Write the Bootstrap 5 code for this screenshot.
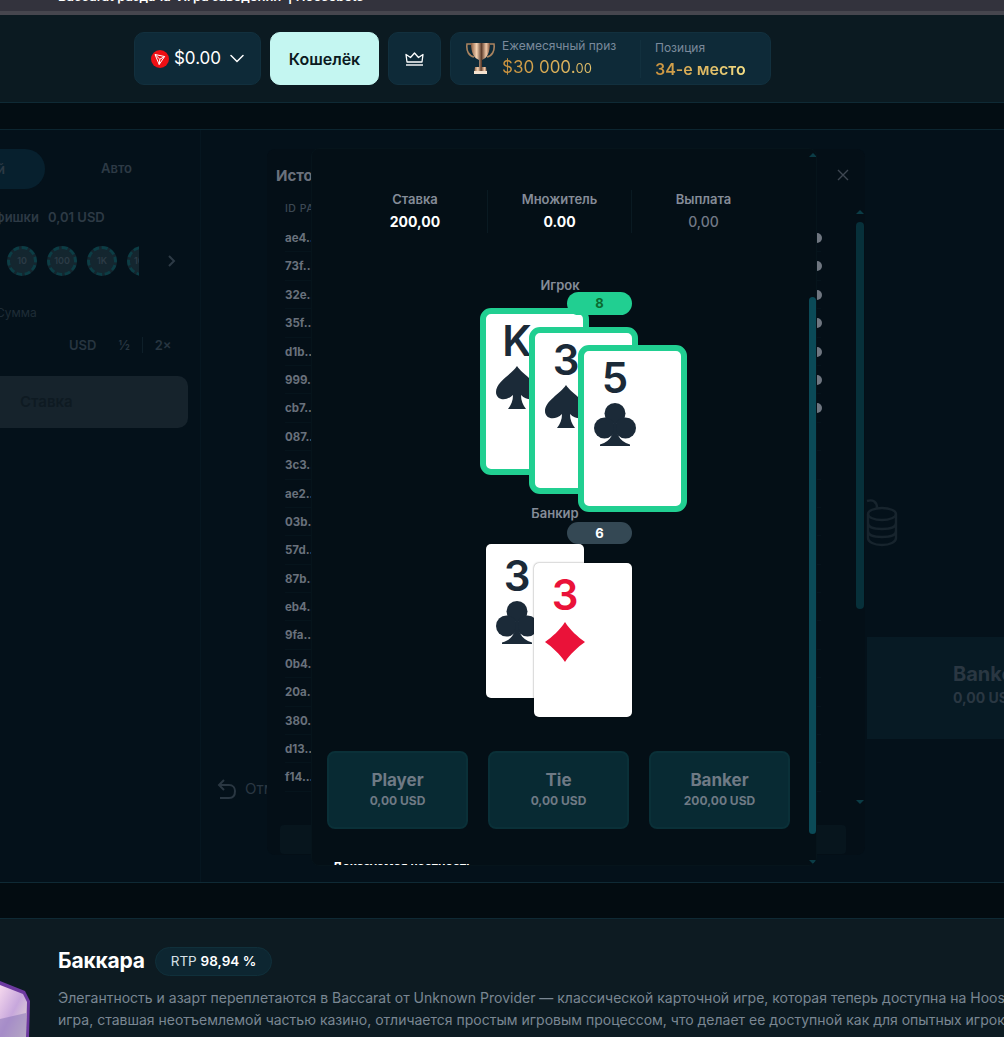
<!DOCTYPE html>
<html lang="ru">
<head>
    <meta charset="UTF-8">
    <meta name="viewport" content="width=device-width, initial-scale=1.0">
    <title>Баккара</title>
    <link href="https://cdn.jsdelivr.net/npm/bootstrap@5.3.3/dist/css/bootstrap.min.css" rel="stylesheet">
    <script src="https://cdn.jsdelivr.net/npm/bootstrap@5.3.3/dist/js/bootstrap.bundle.min.js"></script>
    <style>
        html, body { height: 1037px; overflow: hidden; }
        body { background: #0d1b22; font-family: Inter, "Liberation Sans", sans-serif; color: #fff; }

        /* browser strip */
        .top-strip { height: 15px; background: #33333d; border-bottom: 4px solid #46464e; overflow: hidden; padding-left: 58px; font-size: 13px; font-weight: 600; line-height: 16px; color: #fff; white-space: nowrap; }
        .top-strip span { display: block; margin-top: -12px; }

        /* header */
        .site-head { height: 88px; background: #0b1a21; border-bottom: 1px solid #0f2a35; padding: 17px 0 0 134px; gap: 9px; }
        .head-btn { height: 53px; background: #0e2a38; border: 1px solid #12303e; border-radius: 10px; }
        .balance-btn { width: 127px; font-size: 17px; gap: 5px; }
        .wallet-btn { width: 109px; background: #c4f6f1; border-color: #c4f6f1; color: #0b1a21; font-size: 16px; font-weight: 600; }
        .crown-btn { width: 53px; }
        .prize-box { width: 321px; padding-left: 15px; }
        .prize-col { width: 138px; margin-left: 7px; }
        .pos-col { border-left: 1px solid #12303e; padding-left: 14px; height: 38px; margin-left: 0; }
        .prize-lbl { font-size: 12px; line-height: 16px; color: #7b8a9c; white-space: nowrap; }
        .prize-val { font-size: 17px; line-height: 22px; margin-top: 2px; white-space: nowrap; background: linear-gradient(90deg, #c9913d, #f3dd84); -webkit-background-clip: text; background-clip: text; color: transparent; }
        .prize-val small { font-size: 13px; }
        .pos-val { font-weight: 600; font-size: 16px; }

        .dark-band { height: 27px; background: #030d13; border-bottom: 1px solid #0c2530; }

        /* game area behind the dialogs */
        .game-area { position: relative; height: 753px; background: #04111a; border-bottom: 1px solid #0f2a35; overflow: hidden; }
        .bet-panel { width: 258px; margin-left: -70px; flex-shrink: 0; padding-top: 19px; }
        .mode-tabs { height: 40px; font-size: 13px; font-weight: 600; color: #2d3a45; }
        .mode-on { width: 115px; background: #07202e; border-radius: 0 20px 20px 0; padding-right: 40px; text-align: right; line-height: 40px; }
        .mode-off { width: 143px; text-align: center; line-height: 38px; }
        .chip-lbl { margin-top: 19px; height: 18px; font-size: 13px; font-weight: 600; color: #2d3a45; line-height: 18px; padding-left: 13px; gap: 9px; white-space: nowrap; }
        .chip-row { margin-top: 18px; height: 34px; gap: 10px; padding-left: 77px; position: relative; }
        .chip-clip { width: 132px; overflow: hidden; gap: 10px; margin-right: 18px; }
        .chip { width: 30px; height: 30px; flex-shrink: 0; border-radius: 50%; background: #14262f; border: 3px dashed #0c3d45; font-size: 9px; font-weight: 600; color: #2c3b46; line-height: 24px; text-align: center; }
        .chevron-dim { width: 9px; height: 14px; }
        .sum-lbl { margin-top: 27px; font-size: 12px; color: #1e2c36; padding-left: 66px; line-height: 16px; }
        .sum-row { margin-top: 14px; height: 20px; padding-left: 139px; font-size: 13px; font-weight: 600; color: #273540; line-height: 20px; }
        .sum-row .half { margin-left: 22px; }
        .sum-row .sep { width: 1px; height: 16px; background: #0e1f29; margin: 2px 12px; }
        .stake-btn { margin-top: 21px; height: 52px; background: #16232c; border-radius: 0 10px 10px 0; font-size: 15px; font-weight: 600; color: #0e1a22; line-height: 52px; padding-left: 90px; }
        .table-pane { flex-grow: 1; margin-left: 12px; border-left: 1px solid #061620; padding-top: 369px; overflow: hidden; }
        .coins { display: block; margin-left: 665px; width: 32px; height: 48px; }
        .banker-bg { margin-top: 90px; margin-left: 666px; width: 300px; height: 102px; background: #071a24; padding-left: 86px; color: #2a3742; font-weight: 700; }
        .banker-bg .big { font-size: 20px; line-height: 24px; padding-top: 25px; }
        .banker-bg .sub { font-size: 14px; line-height: 18px; margin-top: 3px; }
        .undo-row { margin-top: 39px; margin-left: 16px; gap: 8px; color: #2a3742; font-size: 15px; line-height: 22px; }

        /* history dialog */
        .history-box { position: absolute; left: 267px; top: 19px; width: 598px; height: 706px; background: #040f17; border-radius: 8px; }
        .history-title { font-size: 15px; font-weight: 700; color: #6a717c; line-height: 20px; padding: 17px 0 0 9px; }
        .history-head { font-size: 10.5px; color: #3c4854; font-weight: 500; line-height: 14px; padding: 16px 0 0 18px; letter-spacing: .5px; }
        .history-rows { margin: 8px 0 0 0; padding: 0 0 0 18px; list-style: none; }
        .history-rows li { height: 28.4px; line-height: 28.4px; font-size: 11.5px; font-weight: 700; color: #69717c; border-bottom: 1px solid #06141c; width: 536px; position: relative; }
        .round-dot { position: absolute; right: -1px; top: 9px; width: 10px; height: 10px; border-radius: 50%; background: #6f7680; }
        .no-dot .round-dot { display: none; }
        .history-close { position: absolute; left: 570px; top: 20px; width: 12px; height: 12px; }
        .scroll-arrow-up, .scroll-arrow-down { position: absolute; width: 0; height: 0; border-left: 4px solid transparent; border-right: 4px solid transparent; }
        .scroll-arrow-up { border-bottom: 4px solid #0b3c46; }
        .scroll-arrow-down { border-top: 4px solid #0b3c46; }
        .history-scroll { position: absolute; left: 589px; top: 73px; width: 8px; height: 387px; border-radius: 4px; background: #07303a; }
        .history-box .scroll-arrow-up { left: 589px; top: 61px; }
        .history-box .scroll-arrow-down { left: 589px; top: 651px; }
        .history-foot { position: absolute; left: 13px; top: 676px; width: 566px; height: 29px; background: #07151d; border-radius: 4px; }

        /* round details dialog */
        .round-box { position: absolute; left: 311px; top: 18px; width: 506px; height: 718px; background: #040f16; border: 1px solid #06141b; border-radius: 8px; overflow: hidden; padding-top: 41px; }
        .stats-row { margin-left: 31px; width: 432px; height: 43px; }
        .stat-col { width: 144px; text-align: center; border-left: 1px solid #0a1a22; }
        .stat-col:first-child { border-left: 0; }
        .stat-lbl { font-size: 13px; font-weight: 600; line-height: 18px; color: #858c98; }
        .stat-val { font-size: 14px; font-weight: 700; line-height: 18px; margin-top: 5px; color: #fff; }
        .stat-val.muted { color: #727986; font-weight: 500; }
        .hand-lbl { font-size: 13px; font-weight: 600; line-height: 16px; color: #858c98; text-align: center; width: 496px; }
        .first-lbl { margin-top: 44px; }
        .banker-lbl { margin-top: -6px; padding-right: 10px; position: relative; }
        .hand { position: relative; margin-left: 168px; width: 207px; }
        .hand-player { height: 203px; margin-top: 15px; }
        .hand-banker { height: 173px; margin-top: 23px; }
        .score { position: absolute; left: 87px; width: 65px; border-radius: 12px; text-align: center; font-size: 13px; font-weight: 700; z-index: 5; }
        .score-win { top: -16px; height: 23px; line-height: 23px; background: #21cf91; color: #0b6a2f; }
        .score-lose { top: -22px; height: 22px; line-height: 22px; background: #344854; color: #fff; }
        .play-card { position: absolute; background: #fff; color: #1b2a38; }
        .play-card.winner { width: 109px; height: 167px; border: 6px solid #21cf91; border-radius: 11px; }
        .play-card.plain { width: 98px; height: 154px; border-radius: 5px; border: 0 solid transparent; box-shadow: 0 0 2px rgba(0,0,0,.5); }
        .p1 { left: 0; top: 0; } .p2 { left: 49px; top: 19px; } .p3 { left: 98px; top: 37px; }
        .b1 { left: 6px; top: 0; } .b2 { left: 54px; top: 19px; }
        .card-face { width: 62px; text-align: center; }
        .winner .card-face { padding-top: 2px; margin-left: 0; }
        .plain .card-face { padding-top: 7px; }
        .rank { font-size: 42px; font-weight: 600; line-height: 50px; }
        .suit { display: block; margin: 0 auto; width: 42px; height: 44px; margin-top: 0; }
        .is-red { color: #ea1239; }
        .bet-tiles { position: absolute; left: 15px; top: 602px; gap: 20px; }
        .bet-tile { width: 141px; height: 78px; background: #082a33; border: 2px solid #0a3038; border-radius: 8px; text-align: center; color: #6f7a85; font-weight: 700; padding-top: 17px; }
        .bet-tile .big { font-size: 17px; line-height: 21px; }
        .bet-tile .sub { font-size: 12px; line-height: 16px; margin-top: 2px; }
        .fair-row { position: absolute; left: 20px; top: 711px; font-size: 12px; font-weight: 700; color: #fff; line-height: 14px; white-space: nowrap; }
        .round-scroll { position: absolute; left: 497px; top: 148px; width: 7px; height: 537px; border-radius: 4px; background: #0b4a57; }
        .round-box .scroll-arrow-up { left: 497px; top: 4px; }
        .round-box .scroll-arrow-down { left: 497px; top: 711px; }

        .gap-band { height: 36px; background: #030c11; border-bottom: 1px solid #0f2a35; }

        /* description */
        .about { height: 119px; overflow: hidden; background: #0d1b22; }
        .about-thumb { width: 58px; flex-shrink: 0; padding-top: 56px; }
        .about-body { padding-top: 27px; flex-grow: 1; min-width: 0; }
        .about-title { font-size: 21px; font-weight: 700; line-height: 30px; margin: 0; letter-spacing: -.2px; }
        .rtp-pill { height: 29px; margin-left: 10px; padding: 0 15px; background: #0d2631; border: 1px solid #10303b; border-radius: 15px; font-size: 13.5px; line-height: 27px; color: #d7e0e6; }
        .rtp-pill b { font-weight: 600; color: #fff; }
        .about-text { margin-top: 11px; font-size: 14px; line-height: 22px; color: #7a8793; white-space: nowrap; overflow: hidden; }
    </style>
</head>
<body>

<div class="top-strip"><span>Baccarat раздача &nbsp;Игра заведении &nbsp;| Hoosebets</span></div>

<header class="site-head d-flex align-items-start">
    <div class="head-btn balance-btn d-flex align-items-center justify-content-center">
        <svg width="18" height="18" viewBox="0 0 18 18"><circle cx="9" cy="9" r="9" fill="#ef0f14"/><path d="M4 4.5 L13.6 6.5 L8.2 14.5 Z M4 4.5 L8.8 9.2 L8.2 14.5 M8.8 9.2 L13.6 6.5" fill="none" stroke="#fff" stroke-width="1" stroke-linejoin="round"/></svg>
        <span>$0.00</span>
        <svg class="ms-1" width="14" height="9" viewBox="0 0 14 9"><path d="M1 1.5 L7 7.5 L13 1.5" fill="none" stroke="#fff" stroke-width="1.5" stroke-linecap="round"/></svg>
    </div>
    <div class="head-btn wallet-btn d-flex align-items-center justify-content-center">Кошелёк</div>
    <div class="head-btn crown-btn d-flex align-items-center justify-content-center">
        <svg width="19" height="14" viewBox="0 0 19 14"><path d="M2 10 L1 2.5 L5.5 5.5 L9.5 1 L13.5 5.5 L18 2.5 L17 10 Z" fill="none" stroke="#fff" stroke-width="1.3" stroke-linejoin="round"/><path d="M1 13 H18" stroke="#fff" stroke-width="1.4"/></svg>
    </div>
    <div class="head-btn prize-box d-flex align-items-center">
        <svg width="29" height="33" viewBox="0 0 29 33">
            <defs><linearGradient id="cup" x1="0" x2="1"><stop offset="0" stop-color="#8a5a3c"/><stop offset=".3" stop-color="#f5d3b3"/><stop offset=".55" stop-color="#5e3d2c"/><stop offset=".8" stop-color="#f0c8a8"/><stop offset="1" stop-color="#7c5038"/></linearGradient></defs>
            <path d="M5 2 H1 C0 9 3 14 8 15 M24 2 H28 C29 9 26 14 21 15" fill="none" stroke="#a9835f" stroke-width="1.6"/>
            <path d="M5 1 H24 C24 11 21 16 16 18 V25 H13 V18 C8 16 5 11 5 1 Z" fill="url(#cup)"/>
            <path d="M9 25 H20 L21 32 H8 Z" fill="url(#cup)"/>
            <rect x="8" y="29" width="13" height="3" fill="#f4e2cf"/>
        </svg>
        <div class="prize-col">
            <div class="prize-lbl">Ежемесячный приз</div>
            <div class="prize-val">$30 000.<small>00</small></div>
        </div>
        <div class="pos-col">
            <div class="prize-lbl">Позиция</div>
            <div class="prize-val pos-val">34-е место</div>
        </div>
    </div>
</header>

<div class="dark-band"></div>

<main class="game-area d-flex">
    <section class="bet-panel">
        <div class="mode-tabs d-flex">
            <div class="mode-on">Ручной</div>
            <div class="mode-off">Авто</div>
        </div>
        <div class="chip-lbl d-flex"><span>Размер фишки</span><span>0,01 USD</span></div>
        <div class="chip-row d-flex align-items-center">
            <div class="chip-clip d-flex">
                <div class="chip">10</div><div class="chip">100</div><div class="chip">1K</div><div class="chip">10K</div>
            </div>
            <svg class="chevron-dim" viewBox="0 0 9 14"><path d="M2 2 L7 7 L2 12" fill="none" stroke="#2d3a45" stroke-width="2"/></svg>
        </div>
        <div class="sum-lbl">Сумма</div>
        <div class="sum-row d-flex"><span>USD</span><span class="half">½</span><span class="sep"></span><span>2×</span></div>
        <div class="stake-btn">Ставка</div>
    </section>

    <section class="table-pane">
        <svg class="coins" viewBox="0 0 32 48" fill="none" stroke="#17242d" stroke-width="2.4">
            <path d="M1 2 C7 0 11 3 11 9"/>
            <ellipse cx="16" cy="15" rx="14" ry="6"/>
            <path d="M2 15 V39 C2 43 8 46 16 46 C24 46 30 43 30 39 V15 M2 24 C2 28 8 30 16 30 C24 30 30 28 30 24 M2 32 C2 36 8 38 16 38 C24 38 30 36 30 32"/>
        </svg>
        <div class="banker-bg">
            <div class="big">Banker</div>
            <div class="sub">0,00 USD</div>
        </div>
        <div class="undo-row d-flex align-items-center">
            <svg width="20" height="22" viewBox="0 0 20 22" fill="none" stroke="#2a3742" stroke-width="2"><path d="M7 2 L2 7 L7 12"/><path d="M2 7 H12 C16 7 18 10 18 13 C18 17 16 20 12 20 H3"/></svg>
            <span>Отмена</span>
        </div>
    </section>

    <section class="history-box">
        <div class="history-title">История ставок</div>
        <div class="history-head">ID РАУНДА</div>
        <ul class="history-rows" id="historyRows"></ul>
        <svg class="history-close" viewBox="0 0 12 12"><path d="M1 1 L11 11 M11 1 L1 11" stroke="#3e4752" stroke-width="1.4"/></svg>
        <span class="scroll-arrow-up"></span>
        <div class="history-scroll"></div>
        <span class="scroll-arrow-down"></span>
        <div class="history-foot"></div>
    </section>

    <section class="round-box">
        <div class="stats-row d-flex">
            <div class="stat-col"><div class="stat-lbl">Ставка</div><div class="stat-val">200,00</div></div>
            <div class="stat-col"><div class="stat-lbl">Множитель</div><div class="stat-val">0.00</div></div>
            <div class="stat-col"><div class="stat-lbl">Выплата</div><div class="stat-val muted">0,00</div></div>
        </div>

        <div class="hand-lbl first-lbl">Игрок</div>
        <div class="hand hand-player">
            <div class="score score-win">8</div>
            <div class="play-card winner p1"><div class="card-face"><div class="rank">K</div><svg class="suit"><use href="#suit-spade"/></svg></div></div>
            <div class="play-card winner p2"><div class="card-face"><div class="rank">3</div><svg class="suit"><use href="#suit-spade"/></svg></div></div>
            <div class="play-card winner p3"><div class="card-face"><div class="rank">5</div><svg class="suit"><use href="#suit-club"/></svg></div></div>
        </div>

        <div class="hand-lbl banker-lbl">Банкир</div>
        <div class="hand hand-banker">
            <div class="score score-lose">6</div>
            <div class="play-card plain b1"><div class="card-face"><div class="rank">3</div><svg class="suit"><use href="#suit-club"/></svg></div></div>
            <div class="play-card plain b2"><div class="card-face is-red"><div class="rank">3</div><svg class="suit"><use href="#suit-diamond"/></svg></div></div>
        </div>

        <div class="bet-tiles d-flex">
            <div class="bet-tile"><div class="big">Player</div><div class="sub">0,00 USD</div></div>
            <div class="bet-tile"><div class="big">Tie</div><div class="sub">0,00 USD</div></div>
            <div class="bet-tile"><div class="big">Banker</div><div class="sub">200,00 USD</div></div>
        </div>
        <div class="fair-row">Доказуемая честность</div>
        <span class="scroll-arrow-up"></span>
        <div class="round-scroll"></div>
        <span class="scroll-arrow-down"></span>
    </section>
</main>

<div class="gap-band"></div>

<section class="about d-flex">
    <div class="about-thumb">
        <svg width="31" height="62" viewBox="0 0 31 62">
            <defs><linearGradient id="thumbFill" x1="0" y1="0" x2="1" y2="1"><stop offset="0" stop-color="#f6d9ee"/><stop offset=".5" stop-color="#c7a7dc"/><stop offset="1" stop-color="#e8e3d2"/></linearGradient></defs>
            <path d="M0 6 L25 16 L30 26 L29 62 H0 Z" fill="#6d3aa0"/>
            <path d="M0 10 L23 19 L27 27 L26 62 H0 Z" fill="url(#thumbFill)"/>
            <path d="M0 44 L26 38 V62 H0 Z" fill="#8b76b8" opacity=".55"/>
        </svg>
    </div>
    <div class="about-body">
        <div class="d-flex align-items-center">
            <h1 class="about-title">Баккара</h1>
            <div class="rtp-pill">RTP <b>98,94 %</b></div>
        </div>
        <div class="about-text">Элегантность и азарт переплетаются в Baccarat от Unknown Provider — классической карточной игре, которая теперь доступна на Hoosebets. Эта<br>игра, ставшая неотъемлемой частью казино, отличается простым игровым процессом, что делает ее доступной как для опытных игроков, так и для новичков.</div>
    </div>
</section>

<svg width="0" height="0" class="position-absolute">
    <symbol id="suit-spade" viewBox="0 0 42 44"><path fill="#1b2a38" d="M21 0 C15 9 0 16 0 26 C0 34 10 36 17 29 C17 35 15 39 12 43 H30 C27 39 25 35 25 29 C32 36 42 34 42 26 C42 16 27 9 21 0 Z"/></symbol>
    <symbol id="suit-club" viewBox="0 0 42 44"><g fill="#1b2a38"><circle cx="21" cy="10.5" r="10.5"/><circle cx="10.5" cy="25" r="10.5"/><circle cx="31.5" cy="25" r="10.5"/><path d="M20 18 H22 C22 30 24 38 36 41.5 V43 H6 V41.5 C18 38 20 30 20 18 Z"/></g></symbol>
    <symbol id="suit-diamond" viewBox="0 0 42 44"><path fill="#ea1239" d="M21 2 C26 10 34 17 41 22 C34 27 26 34 21 42 C16 34 8 27 1 22 C8 17 16 10 21 2 Z"/></symbol>
</svg>

<script>
// history rows come from a plain list, first seven have a result dot showing
const roundIds = ["ae4...", "73f...", "32e...", "35f...", "d1b...", "999...", "cb7...", "087...", "3c3...", "ae2...", "03b...", "57d...", "87b...", "eb4...", "9fa...", "0b4...", "20a...", "380...", "d13...", "f14..."];
const list = document.getElementById("historyRows");
roundIds.forEach(function(id, i) {
    const li = document.createElement("li");
    if (i > 6) li.className = "no-dot";
    li.textContent = id;
    const dot = document.createElement("span");
    dot.className = "round-dot";
    li.appendChild(dot);
    list.appendChild(li);
});
</script>

</body>
</html>
